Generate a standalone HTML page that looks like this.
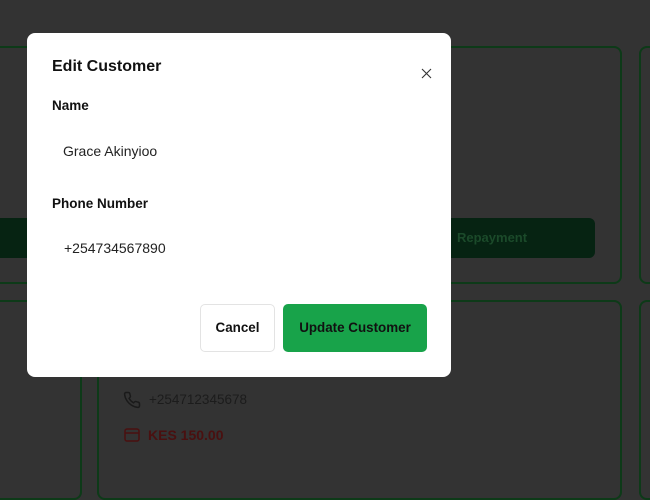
<!DOCTYPE html>
<html><head><style>
*{box-sizing:border-box;margin:0;padding:0}
body{width:650px;height:452px;background:#333;position:relative;overflow:hidden;font-family:"Liberation Sans",sans-serif}
.card{position:absolute;border:2px solid #0d3a18;border-radius:8px}
.btn-bg{position:absolute;background:#062312;border-radius:6px;color:#1b4a2a;font-weight:bold;font-size:13px}
.modal{position:absolute;left:27px;top:33px;width:424px;height:344px;background:#fff;border-radius:8px}
.t{position:absolute;color:#111}
</style></head><body>
<div class="card" style="left:-20px;top:46px;width:100px;height:238px"></div>
<div class="card" style="left:430px;top:46px;width:192px;height:238px"></div>
<div class="card" style="left:639px;top:46px;width:40px;height:238px"></div>
<div class="btn-bg" style="left:-10px;top:218px;width:80px;height:40px"></div>
<div class="btn-bg" style="left:420px;top:218px;width:175px;height:40px"><span style="position:absolute;left:37px;top:12px">Repayment</span></div>
<div class="card" style="left:-20px;top:300px;width:102px;height:200px"></div>
<div class="card" style="left:97px;top:300px;width:525px;height:200px"></div>
<div class="card" style="left:639px;top:300px;width:40px;height:200px"></div>
<svg style="position:absolute;left:123px;top:391px" width="18" height="18" viewBox="0 0 24 24" fill="none" stroke="#1a1a1a" stroke-width="2"><path d="M22 16.9v3a2 2 0 0 1-2.2 2 19.8 19.8 0 0 1-8.6-3.1 19.5 19.5 0 0 1-6-6A19.8 19.8 0 0 1 2.1 4.2 2 2 0 0 1 4.1 2h3a2 2 0 0 1 2 1.7c.1.9.4 1.8.7 2.7a2 2 0 0 1-.5 2.1L8.1 9.8a16 16 0 0 0 6 6l1.3-1.3a2 2 0 0 1 2.1-.4c.9.3 1.8.6 2.7.7a2 2 0 0 1 1.7 2z"/></svg>
<div class="t" style="left:149px;top:392px;font-size:13.5px;color:#1c1c1c">+254712345678</div>
<svg style="position:absolute;left:124px;top:428px" width="16" height="14" viewBox="0 0 16 14" fill="none" stroke="#4a1010" stroke-width="1.5"><rect x="1" y="1" width="14" height="12" rx="2"/><path d="M1 5h14"/></svg>
<div class="t" style="left:148px;top:427px;font-size:14px;font-weight:bold;color:#4a1010">KES 150.00</div>

<div class="modal">
<div class="t" style="left:25px;top:25px;font-size:16px;font-weight:bold">Edit Customer</div>
<svg style="position:absolute;left:394px;top:35px" width="11" height="11" viewBox="0 0 11 11" stroke="#333" stroke-width="1.1"><path d="M1 1L10 10M10 1L1 10"/></svg>
<div class="t" style="left:25px;top:65px;font-size:13.5px;font-weight:bold">Name</div>
<div class="t" style="left:36px;top:110px;font-size:14px;color:#222">Grace Akinyioo</div>
<div class="t" style="left:25px;top:163px;font-size:13.5px;font-weight:bold">Phone Number</div>
<div class="t" style="left:37px;top:207px;font-size:14px;color:#222">+254734567890</div>
<div style="position:absolute;left:173px;top:271px;width:75px;height:48px;border:1px solid #e3e3e3;border-radius:5px;font-size:13.4px;font-weight:bold;text-align:center;line-height:46px;color:#111">Cancel</div>
<div style="position:absolute;left:256px;top:271px;width:144px;height:48px;background:#18a34a;border-radius:5px;font-size:13.4px;font-weight:bold;text-align:center;line-height:48px;color:#111">Update Customer</div>
</div>
</body></html>
